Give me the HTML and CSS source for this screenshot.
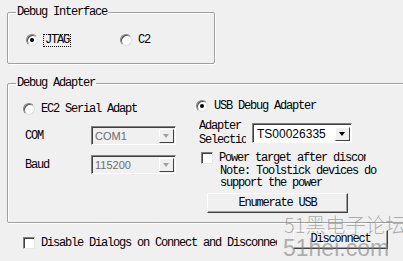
FILE: index.html
```html
<!DOCTYPE html>
<html lang="en">
<head>
    <meta charset="UTF-8">
    <title>Debug Settings</title>
    <link rel="stylesheet" href="styles.css">
</head>
<body>
    <fieldset class="group iface">
        <legend>Debug Interface</legend>
        <div class="radio-row">
            <label class="radio"><span class="dot checked"></span><span class="focus">JTAG</span></label>
            <label class="radio"><span class="dot"></span>C2</label>
        </div>
    </fieldset>

    <fieldset class="group adapter">
        <legend>Debug Adapter</legend>
        <div class="cols">
            <div class="col left">
                <label class="radio ec2"><span class="dot"></span>EC2 Serial Adapt</label>
                <div class="field">
                    <span class="field-label">COM</span>
                    <div class="combo disabled"><span class="value">COM1</span><span class="arrow"></span></div>
                </div>
                <div class="field">
                    <span class="field-label">Baud</span>
                    <div class="combo disabled"><span class="value">115200</span><span class="arrow"></span></div>
                </div>
            </div>
            <div class="col right">
                <label class="radio"><span class="dot checked"></span>USB Debug Adapter</label>
                <div class="field sel">
                    <span class="field-label two">Adapter
Selection</span>
                    <div class="combo wide"><span class="value">TS00026335</span><span class="arrow"></span></div>
                </div>
                <label class="check power"><span class="box"></span><span class="clip">Power target after disconnect</span></label>
                <p class="note">Note: Toolstick devices do<br>support the power</p>
                <button class="btn enum">Enumerate USB</button>
            </div>
        </div>
    </fieldset>

    <div class="bottom">
        <label class="check dialogs"><span class="box"></span><span class="clip">Disable Dialogs on Connect and Disconnect</span></label>
        <button class="btn disc">Disconnect</button>
    </div>

    <!-- forum watermark burned into the screenshot -->
    <div class="mark mark-cn">51黑电子论坛</div>
    <div class="mark mark-en">51hei.com</div>
</body>
</html>
```

FILE: styles.css
```css
html, body {
    margin: 0;
    padding: 0;
}

body {
    width: 403px;
    height: 261px;
    overflow: hidden;
    position: relative;
    background: #f0f0f0;
    color: #000;
    font-family: "Liberation Mono", "Courier New", monospace;
    font-size: 12px;
    letter-spacing: -1.2px;
    line-height: 12px;
}

/* group boxes */
.group {
    margin: 0;
    padding: 0;
    border: 1px solid #a0a0a0;
    box-shadow: inset 1px 1px 0 #fff, 1px 1px 0 #fff;
    border-radius: 2px;
    box-sizing: border-box;
}

.group legend {
    margin-left: 8px;
    padding: 0 1px;
    line-height: 12px;
}

.iface {
    margin: 6px 0 0 7px;
    width: 191px;
    height: 58px;
}

.iface .radio-row {
    display: flex;
    padding: 15px 0 0 18px;
}

.iface .radio {
    width: 94px;
}

.adapter {
    margin: 13px 0 0 7px;
    width: 420px;
    height: 146px;
}

/* radio buttons */
.radio {
    display: flex;
    align-items: center;
    height: 14px;
}

.dot {
    width: 12px;
    height: 12px;
    box-sizing: border-box;
    border-radius: 50%;
    background: #fff;
    border: 1px solid;
    border-color: #808080 #e0e0e0 #e0e0e0 #808080;
    box-shadow: inset 1px 1px 0 #505050;
    margin-right: 6px;
    position: relative;
    flex: none;
}

.dot.checked::after {
    content: "";
    position: absolute;
    left: 3px;
    top: 3px;
    width: 4px;
    height: 4px;
    border-radius: 50%;
    background: #000;
}

.focus {
    border: 1px dotted #000;
    padding: 0 1px;
    line-height: 11px;
    margin-left: -1px;
}

/* adapter columns */
.cols {
    display: flex;
    padding: 10px 0 0 15px;
}

.col.left {
    width: 173px;
}

.radio.ec2 {
    margin-top: 3px;
}

.col.left .field {
    display: flex;
    align-items: center;
    padding-left: 2px;
}

.col.left .field:nth-child(2) {
    margin-top: 10px;
}

.col.left .field:nth-child(3) {
    margin-top: 10px;
}

.field-label {
    width: 66px;
}

.combo {
    display: flex;
    align-items: center;
    justify-content: space-between;
    width: 85px;
    height: 19px;
    box-sizing: border-box;
    border: 1px solid;
    border-color: #808080 #fff #fff #808080;
    box-shadow: inset 1px 1px 0 #404040;
    background: #fff;
    font-family: "Liberation Sans", sans-serif;
    font-size: 11px;
    letter-spacing: 0;
    padding: 1px 1px 0 3px;
}

.combo .arrow {
    width: 15px;
    height: 14px;
    box-sizing: border-box;
    background: #f0f0f0;
    border: 1px solid;
    border-color: #fff #404040 #404040 #fff;
    position: relative;
}

.combo .arrow::after {
    content: "";
    position: absolute;
    left: 3px;
    top: 4px;
    border: 3.5px solid transparent;
    border-top: 4px solid #000;
    border-bottom: 0;
}

.combo.disabled {
    background: #f0f0f0;
    color: #6d6d6d;
}

.combo.disabled .arrow::after {
    border-top-color: #a0a0a0;
}

.col.right .field.sel {
    display: flex;
    align-items: center;
    margin-top: 6px;
    padding-left: 3px;
}

.field-label.two {
    width: 47px;
    overflow: hidden;
    white-space: pre;
    line-height: 14px;
    margin-right: 6px;
}

.combo.wide {
    width: 100px;
    height: 20px;
    font-size: 12px;
    padding-left: 4px;
}

/* check boxes */
.check {
    display: flex;
    align-items: center;
}

.box {
    width: 12px;
    height: 12px;
    box-sizing: border-box;
    background: #fff;
    border: 1px solid;
    border-color: #808080 #e8e8e8 #e8e8e8 #808080;
    box-shadow: inset 1px 1px 0 #404040;
    margin-right: 6px;
    flex: none;
}

.clip {
    overflow: hidden;
    white-space: nowrap;
}

.check.power {
    margin: 5px 0 0 5px;
    width: 165px;
}

.note {
    margin: 1px 0 0 24px;
    line-height: 12px;
}

/* push buttons */
.btn {
    display: block;
    font: inherit;
    letter-spacing: inherit;
    color: #000;
    background: #f0f0f0;
    border: 1px solid;
    border-color: #fff #404040 #404040 #fff;
    box-shadow: inset -1px -1px 0 #a0a0a0;
    padding: 0;
    text-align: center;
}

.btn.enum {
    margin: 4px 0 0 11px;
    width: 141px;
    height: 20px;
}

.bottom {
    display: flex;
    align-items: center;
    padding: 8px 0 0 23px;
}

.check.dialogs {
    width: 254px;
    margin-top: 6px;
}

.btn.disc {
    margin-left: 16px;
    width: 95px;
    height: 19px;
    margin-top: -2px;
}

/* watermark overlay */
.mark {
    position: absolute;
    color: rgba(128, 128, 128, 0.6);
    letter-spacing: 0;
    white-space: nowrap;
    pointer-events: none;
}

.mark-cn {
    left: 284px;
    top: 212px;
    font-family: "Noto Sans CJK SC", sans-serif;
    font-weight: 300;
    font-size: 20px;
    line-height: 26px;
}

.mark-en {
    left: 283px;
    top: 236px;
    font-family: "Liberation Sans", sans-serif;
    font-size: 23px;
    line-height: 24px;
}
```
